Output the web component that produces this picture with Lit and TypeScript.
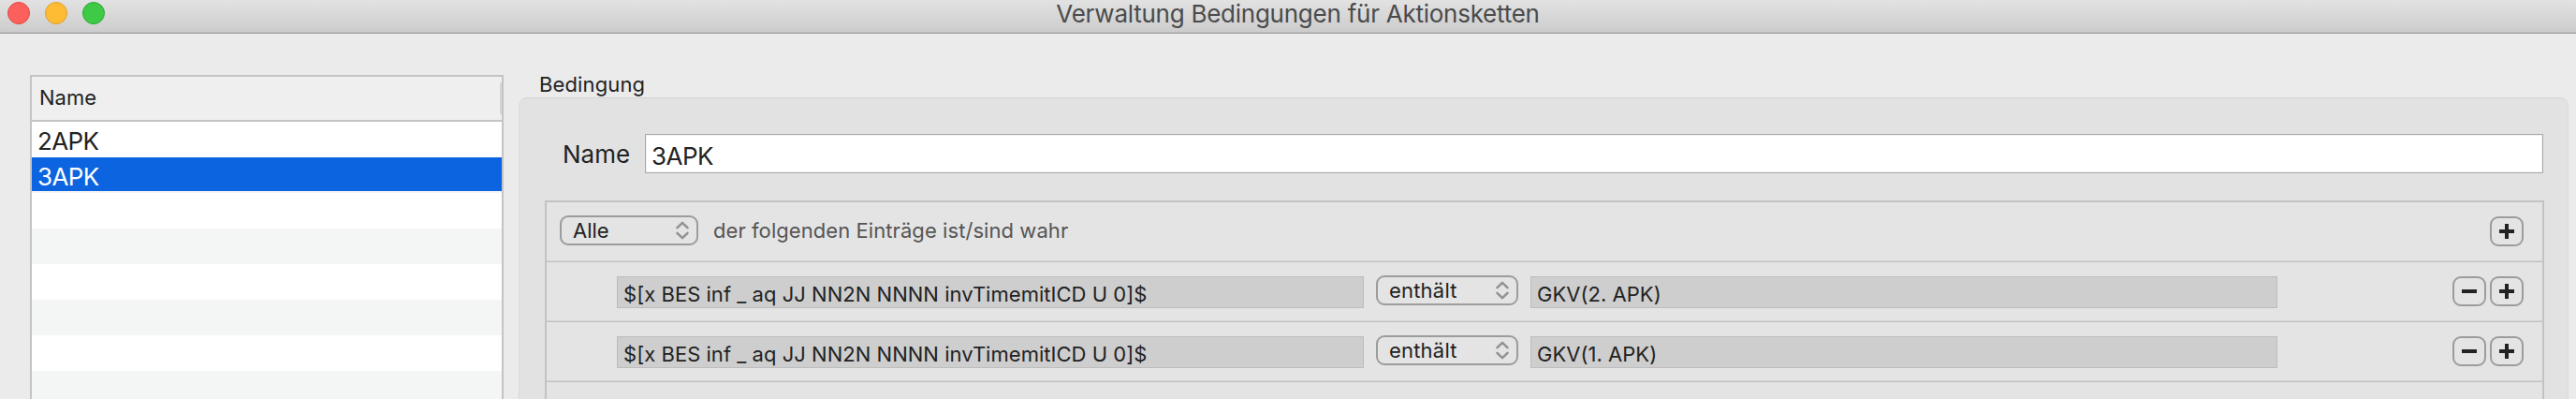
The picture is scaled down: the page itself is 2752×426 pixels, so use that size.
import { LitElement, html, css } from "lit";
import { customElement, property } from "lit/decorators.js";

@customElement("popup-select")
class PopupSelect extends LitElement {
  @property() value = "";

  static styles = css`
    :host {
      box-sizing: border-box;
      display: flex;
      align-items: center;
      justify-content: space-between;
      height: 32px;
      padding: 0 8px 0 12px;
      border: 2px solid #9c9c9c;
      border-radius: 9px;
      line-height: 28px;
      color: #222;
    }
    svg { display: block; }
  `;

  render() {
    return html`
      <span>${this.value}</span>
      <svg width="14" height="20" viewBox="0 0 14 20" fill="none" stroke="#929292"
        stroke-width="2.5" stroke-linecap="round" stroke-linejoin="round">
        <path d="M1.500 7.200 7 1.800l5.500 5.400M1.500 12.800 7 18.200l5.500-5.400" />
      </svg>
    `;
  }
}

@customElement("square-button")
class SquareButton extends LitElement {
  @property() kind = "plus";

  static styles = css`
    :host {
      box-sizing: border-box;
      display: grid;
      place-items: center;
      width: 36px;
      height: 32px;
      border: 2px solid #9c9c9c;
      border-radius: 9px;
    }
    svg { display: block; }
  `;

  render() {
    const shape = this.kind === "plus" ? "M0 6h6V0h4v6h6v4h-6v6H6v-6H0z" : "M0 6h16v4H0z";
    return html`
      <svg width="16" height="16" viewBox="0 0 16 16" fill="#222"><path d=${shape} /></svg>
    `;
  }
}

@customElement("app-root")
class AppRoot extends LitElement {
  private names = ["2APK", "3APK", "", "", "", "", "", ""];
  private selected = "3APK";
  private rules = [
    { field: "$[x BES inf _ aq JJ NN2N NNNN invTimemitICD U 0]$", op: "enthält", value: "GKV(2. APK)" },
    { field: "$[x BES inf _ aq JJ NN2N NNNN invTimemitICD U 0]$", op: "enthält", value: "GKV(1. APK)" },
  ];

  static styles = css`
    :host {
      display: flex;
      flex-direction: column;
      height: 426px;
      overflow: hidden;
      background: #ebebeb;
      font: 22px Inter, sans-serif;
      color: #222;
      white-space: nowrap;
    }
    * { box-sizing: border-box; }
    .titlebar {
      flex: none;
      display: grid;
      grid-template-columns: 1fr auto 1fr;
      height: 36px;
      padding-left: 8px;
      background: linear-gradient(#e2e2e2, #cccccc);
      border-bottom: 1px solid #a2a2a2;
      box-shadow: inset 0 -1px #bcbcbc;
    }
    .lights { display: flex; gap: 16px; padding-top: 2px; }
    .light { width: 24px; height: 24px; border-radius: 50%; border: 1px solid; }
    .close { background: #fc605c; border-color: #e14640; }
    .minimize { background: #fdbc34; border-color: #de9f2c; }
    .zoom { background: #3ec946; border-color: #2aa832; }
    .title {
      font-size: 26px;
      line-height: 30px;
      letter-spacing: -0.25px;
      color: #4b4b4b;
      margin-left: 13px;
    }
    .content { flex: 1; min-height: 0; display: flex; padding: 0 8px 0 32px; gap: 16px; }
    .list {
      flex: none;
      width: 506px;
      height: 420px;
      margin-top: 44px;
      border: 2px solid #c4c4c4;
      background: #fff;
    }
    .list-header {
      display: flex;
      justify-content: space-between;
      height: 48px;
      padding-left: 8px;
      line-height: 45px;
      background: #efefef;
      border-bottom: 2px solid #c4c4c4;
    }
    .grip { width: 2px; height: 34px; margin-top: 6px; background: #d4d4d4; }
    .row {
      height: 38px;
      padding-left: 6px;
      font-size: 26px;
      line-height: 42px;
      letter-spacing: -0.6px;
    }
    .row:nth-child(even) { background: #f4f5f5; }
    .row.selected {
      color: #fff;
      background: linear-gradient(#0c64e0 36px, #f4f5f5 36px);
    }
    .detail { flex: 1; min-width: 0; }
    .caption { height: 68px; padding: 39px 0 0 22px; line-height: 30px; letter-spacing: 0.13px; }
    .panel {
      height: 360px;
      padding: 38px 25px 0 27px;
      border: 1px solid #d3d3d3;
      border-left-color: #dadada;
      border-right-color: #dadada;
      border-radius: 9px;
      background: #e2e2e2;
    }
    .name-line { display: flex; height: 42px; padding: 0 1px 0 19px; font-size: 26px; }
    .name-label { width: 88px; line-height: 44px; }
    .name-input {
      flex: 1;
      padding-left: 6px;
      line-height: 46px;
      letter-spacing: -0.55px;
      border: 1px solid #a9a9a9;
      box-shadow: inset 0 0 0 1px #f2f2f2;
      background: #fff;
    }
    .rules {
      height: 300px;
      margin-top: 29px;
      border: 2px solid #c3c3c3;
      background: #e4e4e4;
    }
    .rule {
      display: flex;
      height: 64px;
      padding: 14px 20px 0 75px;
      border-bottom: 1px solid #c0c0c0;
      box-shadow: inset 0 -1px #d4d4d4;
    }
    .rule.head { padding-left: 14px; }
    .scope { width: 148px; }
    .phrase { margin-left: 16px; line-height: 32px; letter-spacing: 0.07px; color: #555; }
    .operator { width: 152px; margin: 0 13px; letter-spacing: 0.2px; }
    .field {
      width: 798px;
      height: 34px;
      margin-top: 1px;
      padding-left: 6px;
      line-height: 36px;
      letter-spacing: 0.03px;
      border: 1px solid #bdbdbd;
      background: #cecece;
    }
    .buttons { display: flex; gap: 4px; margin: 1px 0 0 auto; }
  `;

  render() {
    return html`
      <div class="titlebar">
        <div class="lights">
          <div class="light close"></div>
          <div class="light minimize"></div>
          <div class="light zoom"></div>
        </div>
        <div class="title">Verwaltung Bedingungen für Aktionsketten</div>
      </div>
      <div class="content">
        <div class="list">
          <div class="list-header"><span>Name</span><div class="grip"></div></div>
          <div>
            ${this.names.map(
              (n) => html`<div class="row ${n === this.selected ? "selected" : ""}">${n}</div>`
            )}
          </div>
        </div>
        <div class="detail">
          <div class="caption">Bedingung</div>
          <div class="panel">
            <div class="name-line">
              <div class="name-label">Name</div>
              <div class="name-input">3APK</div>
            </div>
            <div class="rules">
              <div class="rule head">
                <popup-select class="scope" value="Alle"></popup-select>
                <span class="phrase">der folgenden Einträge ist/sind wahr</span>
                <div class="buttons"><square-button kind="plus"></square-button></div>
              </div>
              ${this.rules.map(
                (r) => html`
                  <div class="rule">
                    <div class="field">${r.field}</div>
                    <popup-select class="operator" value=${r.op}></popup-select>
                    <div class="field">${r.value}</div>
                    <div class="buttons">
                      <square-button kind="minus"></square-button>
                      <square-button kind="plus"></square-button>
                    </div>
                  </div>
                `
              )}
            </div>
          </div>
        </div>
      </div>
    `;
  }
}
